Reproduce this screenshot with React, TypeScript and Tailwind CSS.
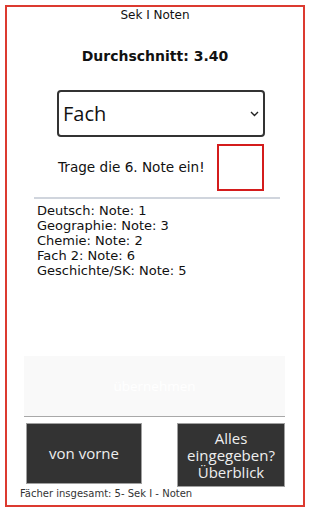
import React from "react";

export default function App() {
  const grades = [
    "Deutsch: Note: 1",
    "Geographie: Note: 3",
    "Chemie: Note: 2",
    "Fach 2: Note: 6",
    "Geschichte/SK: Note: 5",
  ];
  return (
    <div className="w-[312px] h-[512px] bg-white pt-[5px] pl-[5px]" style={{ fontFamily: '"DejaVu Sans", Verdana, sans-serif' }}>
      <div className="w-[300px] h-[502px] border-2 border-[#dc3a30] flex flex-col">
        <div className="mt-[1px] text-center text-[12px] leading-[15px] text-[#111]">Sek I Noten</div>
        <div className="mt-[25px] text-center text-[14px] leading-[17px] font-bold text-[#111]">Durchschnitt: 3.40</div>
        <div className="mt-[25px] ml-[50px] relative w-[208px] h-[47px]">
          <select
            className="appearance-none w-full h-full border-2 border-[#333] rounded-[4px] bg-white pl-[4px] text-[20px] text-[#111] outline-none"
            style={{ fontFamily: '"Open Sans", sans-serif' }}
            defaultValue="Fach"
          >
            <option value="Fach">Fach</option>
          </select>
          <svg className="absolute right-[6px] top-[21px] pointer-events-none" width="9" height="6" viewBox="0 0 9 6">
            <path d="M1 1 L4.5 4.5 L8 1" fill="none" stroke="#222" strokeWidth="1.4" />
          </svg>
        </div>
        <div className="mt-[7px] ml-[51px] flex items-center">
          <span className="w-[148px] text-[13.6px] leading-[17px] text-[#111] whitespace-nowrap">Trage die 6. Note ein!</span>
          <div className="ml-[11px] w-[47px] h-[47px] border-2 border-[#d41c1c]" />
        </div>
        <div className="mt-[6px] ml-[27px] w-[246px] h-[2px] bg-[#d0d5dd]" />
        <div className="mt-[4px] ml-[30px] flex flex-col text-[13px] leading-[15px] text-[#111]">
          {grades.map((g) => (
            <div key={g}>{g}</div>
          ))}
        </div>
        <div
          className="mt-[78px] ml-[17px] w-[261px] h-[61px] bg-[#f9f9f9] border-b border-[#a8a8a8] flex items-center justify-center text-white text-[13.5px]"
          style={{ fontFamily: '"Open Sans", sans-serif' }}
        >
          übernehmen
        </div>
        <div className="mt-[6px] ml-[19px] flex items-start" style={{ fontFamily: '"Open Sans", sans-serif' }}>
          <div className="w-[116px] h-[61px] bg-[#333] border border-[#a0a0a0] flex items-center justify-center text-[15px] text-[#eee]">
            von vorne
          </div>
          <div className="ml-[35px] w-[108px] h-[64px] bg-[#333] border border-[#a0a0a0] flex flex-col items-center justify-center text-center text-[15px] leading-[17px] text-[#eee]">
            <div>Alles</div>
            <div>eingegeben?</div>
            <div>Überblick</div>
          </div>
        </div>
        <div className="mt-[1px] ml-[13px] text-[10px] leading-[12px] text-[#333]">Fächer insgesamt: 5- Sek I - Noten</div>
      </div>
    </div>
  );
}
